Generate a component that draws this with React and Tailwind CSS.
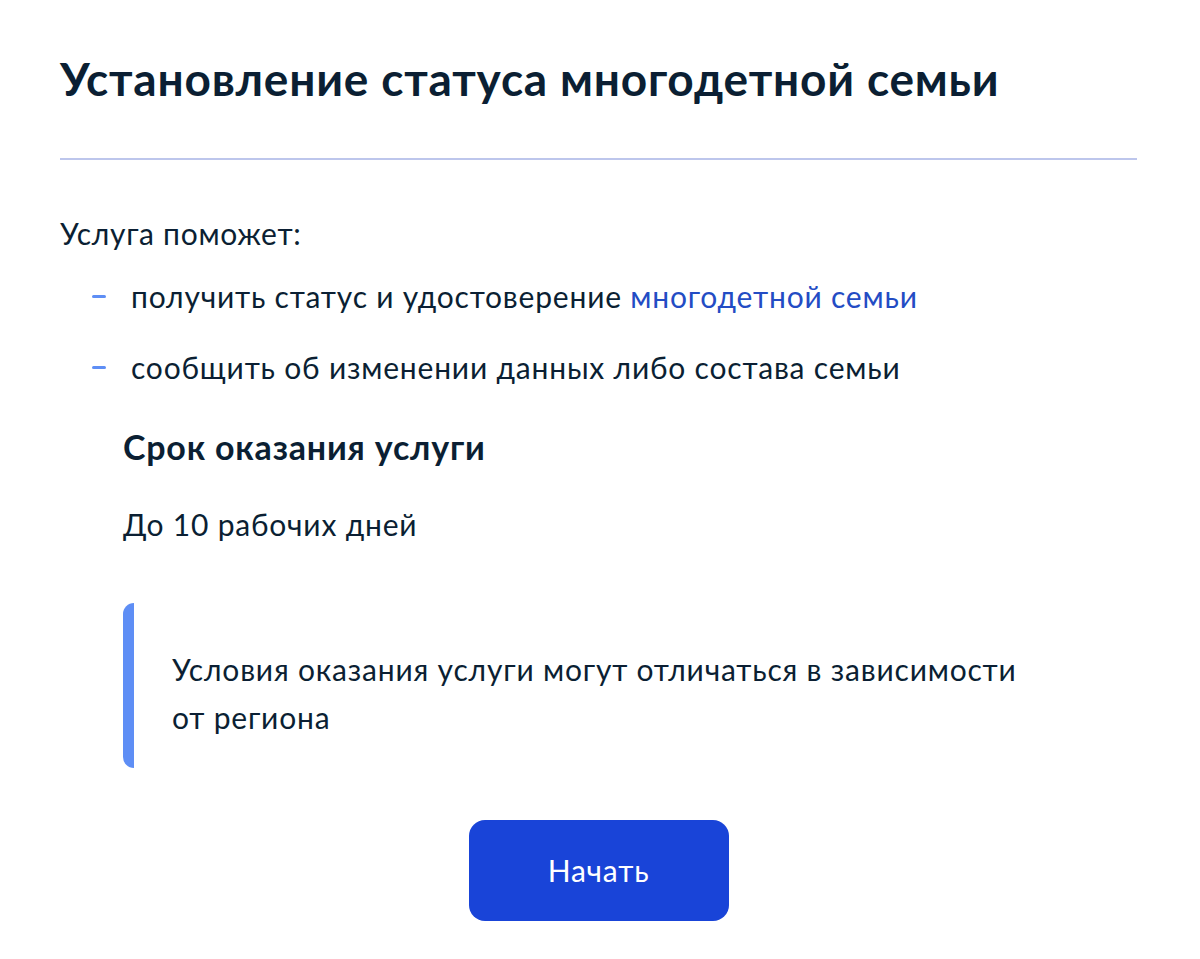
export default function App() {
  return (
    <div
      className="min-h-[959px] bg-white pl-[60px] pr-[63px] pt-[51px] text-[#0b1f33]"
      style={{ fontFamily: 'Lato, "Noto Sans", sans-serif' }}
    >
      <h1 className="text-[46px] font-bold leading-[56px] tracking-[0.8px]">
        Установление статуса многодетной семьи
      </h1>
      <div className="mt-[51px] h-[2px] bg-[#bdc6ec]" />
      <p className="mt-[53px] text-[30px] leading-[40px] tracking-[0.7px]">Услуга поможет:</p>
      <ul className="mt-[23px] flex flex-col gap-[31px] text-[30px] leading-[40px] tracking-[0.8px]">
        <li className="flex items-center">
          <span className="ml-[32px] mr-[25px] h-[3px] w-[14px] shrink-0 rounded-full bg-[#5e8ef5]" />
          <span>
            получить статус и удостоверение{' '}
            <a className="text-[#234cc4]">многодетной семьи</a>
          </span>
        </li>
        <li className="flex items-center">
          <span className="ml-[32px] mr-[25px] h-[3px] w-[14px] shrink-0 rounded-full bg-[#5e8ef5]" />
          <span>сообщить об изменении данных либо состава семьи</span>
        </li>
      </ul>
      <div className="pl-[63px]">
        <h2 className="mt-[40px] text-[34px] font-bold leading-[40px] tracking-[0.8px]">
          Срок оказания услуги
        </h2>
        <p className="mt-[37px] text-[30px] leading-[40px] tracking-[0.8px]">До 10 рабочих дней</p>
        <div className="mt-[59px] flex">
          <div className="w-[11px] shrink-0 rounded-l-[12px] bg-[#5e8ef5]" />
          <p className="pb-[27px] pl-[38px] pt-[42px] text-[30px] leading-[48px] tracking-[0.8px]">
            Условия оказания услуги могут отличаться в зависимости
            <br />
            от региона
          </p>
        </div>
      </div>
      <div className="mt-[52px] flex justify-center">
        <button className="flex h-[101px] w-[260px] items-center justify-center rounded-[16px] bg-[#1944d8] text-[30px] tracking-[0.8px] text-white">
          Начать
        </button>
      </div>
    </div>
  );
}
